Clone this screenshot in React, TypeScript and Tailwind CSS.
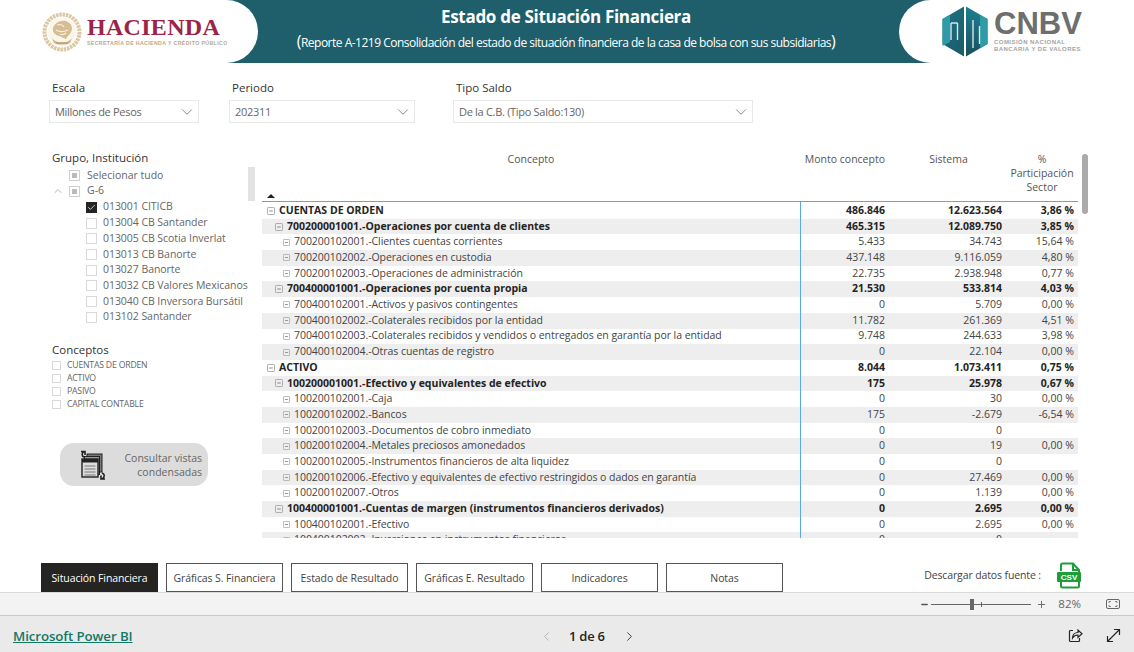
import { ChevronDown, ChevronUp, ChevronLeft, ChevronRight, Check, Minus, Plus } from 'lucide-react';

type Row = { level: 0 | 1 | 2; label: string; monto: string; sistema: string; pct: string };

const rows: Row[] = [
    { level: 0, label: 'CUENTAS DE ORDEN', monto: '486.846', sistema: '12.623.564', pct: '3,86 %' },
    { level: 1, label: '700200001001.-Operaciones por cuenta de clientes', monto: '465.315', sistema: '12.089.750', pct: '3,85 %' },
    { level: 2, label: '700200102001.-Clientes cuentas corrientes', monto: '5.433', sistema: '34.743', pct: '15,64 %' },
    { level: 2, label: '700200102002.-Operaciones en custodia', monto: '437.148', sistema: '9.116.059', pct: '4,80 %' },
    { level: 2, label: '700200102003.-Operaciones de administración', monto: '22.735', sistema: '2.938.948', pct: '0,77 %' },
    { level: 1, label: '700400001001.-Operaciones por cuenta propia', monto: '21.530', sistema: '533.814', pct: '4,03 %' },
    { level: 2, label: '700400102001.-Activos y pasivos contingentes', monto: '0', sistema: '5.709', pct: '0,00 %' },
    { level: 2, label: '700400102002.-Colaterales recibidos por la entidad', monto: '11.782', sistema: '261.369', pct: '4,51 %' },
    { level: 2, label: '700400102003.-Colaterales recibidos y vendidos o entregados en garantía por la entidad', monto: '9.748', sistema: '244.633', pct: '3,98 %' },
    { level: 2, label: '700400102004.-Otras cuentas de registro', monto: '0', sistema: '22.104', pct: '0,00 %' },
    { level: 0, label: 'ACTIVO', monto: '8.044', sistema: '1.073.411', pct: '0,75 %' },
    { level: 1, label: '100200001001.-Efectivo y equivalentes de efectivo', monto: '175', sistema: '25.978', pct: '0,67 %' },
    { level: 2, label: '100200102001.-Caja', monto: '0', sistema: '30', pct: '0,00 %' },
    { level: 2, label: '100200102002.-Bancos', monto: '175', sistema: '-2.679', pct: '-6,54 %' },
    { level: 2, label: '100200102003.-Documentos de cobro inmediato', monto: '0', sistema: '0', pct: '' },
    { level: 2, label: '100200102004.-Metales preciosos amonedados', monto: '0', sistema: '19', pct: '0,00 %' },
    { level: 2, label: '100200102005.-Instrumentos financieros de alta liquidez', monto: '0', sistema: '0', pct: '' },
    { level: 2, label: '100200102006.-Efectivo y equivalentes de efectivo restringidos o dados en garantía', monto: '0', sistema: '27.469', pct: '0,00 %' },
    { level: 2, label: '100200102007.-Otros', monto: '0', sistema: '1.139', pct: '0,00 %' },
    { level: 1, label: '100400001001.-Cuentas de margen (instrumentos financieros derivados)', monto: '0', sistema: '2.695', pct: '0,00 %' },
    { level: 2, label: '100400102001.-Efectivo', monto: '0', sistema: '2.695', pct: '0,00 %' },
    { level: 2, label: '100400102002.-Inversiones en instrumentos financieros', monto: '0', sistema: '0', pct: '' },
];

const institutions = [
    '013001 CITICB',
    '013004 CB Santander',
    '013005 CB Scotia Inverlat',
    '013013 CB Banorte',
    '013027 Banorte',
    '013032 CB Valores Mexicanos',
    '013040 CB Inversora Bursátil',
    '013102 Santander',
];

const tabs = ['Situación Financiera', 'Gráficas S. Financiera', 'Estado de Resultado', 'Gráficas E. Resultado', 'Indicadores', 'Notas'];

function Dropdown({ label, value, width, gap }: { label: string; value: string; width: string; gap: string }) {
    return (
        <div className={`${width} ${gap} shrink-0`}>
            <div className="pl-[3px] text-[11.500px] leading-[16px] text-[#333]">{label}</div>
            <div className="mt-[4px] flex h-[23px] items-center justify-between border border-[#e8e8e8] pl-[5px] pr-[2px] pt-[2px] text-[11px] tracking-[-0.3px] text-[#666]">
                <span>{value}</span>
                <ChevronDown size={18} strokeWidth={0.9} className="-mt-[2px] text-[#555]" />
            </div>
        </div>
    );
}

function SealLogo() {
    return (
        <svg width="40" height="40" viewBox="0 0 40 40">
            <circle cx="20" cy="20" r="17.500" fill="none" stroke="#dcc7a3" strokeWidth="4" strokeDasharray="2.500 0.800" />
            <circle cx="20" cy="20" r="14.500" fill="#fbf6ec" />
            <path d="M11 16c2-6 10-9 15-6 4 2 5 7 3 10-1 3-4 4-5 7-3-1-4-2-7-3-4-1-7-4-6-8z" fill="#d6bd93" />
            <path d="M15 13c3-1 6 0 7 2M14 18c3 2 8 2 12 0M18 22c2 1 4 1 6-1" stroke="#f7efe0" strokeWidth="1.200" fill="none" />
            <path d="M10 26c4 6 16 6 20 0l-2 5c-4 2-12 2-16 0z" fill="#cfb487" />
            <path d="M14 31h12" stroke="#bfa273" strokeWidth="1.500" />
        </svg>
    );
}

function CnbvMark() {
    return (
        <svg width="46" height="51" viewBox="0 0 46 51">
            <defs>
                <linearGradient id="hexa" x1="0" y1="0" x2="0" y2="1">
                    <stop offset="0" stopColor="#1c7f92" />
                    <stop offset="1" stopColor="#19505f" />
                </linearGradient>
                <linearGradient id="hexb" x1="0" y1="0" x2="0.600" y2="1">
                    <stop offset="0" stopColor="#1b7486" />
                    <stop offset="1" stopColor="#1c5d6c" />
                </linearGradient>
            </defs>
            <path d="M22 0.500 0.500 13v25L22 50.500z" fill="url(#hexb)" />
            <path d="M24 0.500 45.500 13v25L24 50.500z" fill="url(#hexa)" />
            <path d="M0.500 13 8 9v27l-7.500 4z" fill="#2f9aa8" />
            <path d="M38 9l7.500 4v25L38 42z" fill="#2f9aa8" />
            <path d="M9 17v17M15.500 17v17M15.500 17h-6.500" stroke="#d5e8ea" strokeWidth="1.400" fill="none" />
            <path d="M31 14v28M37.500 20v18" stroke="#d5e8ea" strokeWidth="1.400" fill="none" />
        </svg>
    );
}

function ExpandBox({ size }: { size: number }) {
    return (
        <svg width={size} height={size} viewBox="0 0 9 9" className="shrink-0">
            <rect x="0.500" y="0.500" width="8" height="8" rx="1" fill="none" stroke="#a0a0a0" />
            <path d="M2.500 4.500h4" stroke="#808080" />
        </svg>
    );
}

function ViewsIcon() {
    return (
        <svg width="30" height="32" viewBox="0 0 30 32" fill="none">
            <path d="M6 8C3.500 7 3.500 4 6 2.500M3 2.500h4v3.500" stroke="#222" strokeWidth="1.600" />
            <rect x="9" y="5" width="15" height="18" fill="#777" stroke="#222" />
            <rect x="6.500" y="7.500" width="15" height="18" fill="#999" stroke="#222" />
            <rect x="4" y="10" width="16" height="18" fill="#ddd" stroke="#222" strokeWidth="1.400" />
            <rect x="4" y="10" width="16" height="3.500" fill="#222" />
            <path d="M6.500 17h11M6.500 20h11M6.500 23h11M6.500 26h11" stroke="#777" />
            <path d="M24 24c3 1 3 4 0 6M27 30h-4v-3.500" stroke="#222" strokeWidth="1.600" />
        </svg>
    );
}

function CsvIcon() {
    return (
        <svg width="26" height="27" viewBox="0 0 26 27" fill="none">
            <path d="M5 9V3a1.500 1.500 0 0 1 1.500-1.500H17L23 8v16a1.500 1.500 0 0 1-1.500 1.500h-15A1.500 1.500 0 0 1 5 24v-4" stroke="#1f9d3a" strokeWidth="2" />
            <path d="M17 2v6h6" stroke="#1f9d3a" strokeWidth="2" />
            <rect x="1" y="10" width="24" height="10" rx="1" fill="#1f9d3a" />
            <text x="13" y="18.200" textAnchor="middle" fontSize="8" fontWeight="700" fill="#fff" fontFamily="'Liberation Sans', sans-serif">CSV</text>
        </svg>
    );
}

function ShareIcon() {
    return (
        <svg width="15" height="15" viewBox="0 0 15 15" fill="none" stroke="#252423" strokeWidth="1.200">
            <path d="M5 2.500H2.500a1 1 0 0 0-1 1v9a1 1 0 0 0 1 1h8a1 1 0 0 0 1-1V10" />
            <path d="M4.500 10c0-3.500 2.500-5.500 5.500-5.500V2l4 3.700-4 3.700V7c-2.500 0-4.200.8-5.500 3z" />
        </svg>
    );
}

function ExpandIcon() {
    return (
        <svg width="15" height="15" viewBox="0 0 15 15" fill="none" stroke="#252423" strokeWidth="1.200">
            <path d="M1.500 13.500l12-12M8 1.500h5.500V7M1.500 8v5.500H7" />
        </svg>
    );
}

function App() {
    return (
        <div className="flex h-screen w-full flex-col overflow-hidden bg-white font-['Open_Sans','Noto_Sans',sans-serif]">
            <header className="flex h-[63px] shrink-0 bg-[#1f5f6b]">
                <div className="flex w-[258px] shrink-0 items-center gap-[5px] rounded-r-[46px] bg-white pl-[42px]">
                    <SealLogo />
                    <div className="-mt-[2px] flex flex-col">
                        <span className="font-['Liberation_Serif',serif] text-[24px] font-bold leading-[26px] tracking-[0.3px] text-[#9d2449]">HACIENDA</span>
                        <span className="whitespace-nowrap font-['Liberation_Sans',sans-serif] text-[5.200px] font-bold leading-[7px] tracking-[0.4px] text-[#b8a88f]">SECRETARÍA DE HACIENDA Y CRÉDITO PÚBLICO</span>
                    </div>
                </div>
                <div className="flex min-w-0 flex-1 flex-col items-center pr-[25px] pt-[5px] text-white">
                    <div className="text-[17px] font-bold leading-[24px] tracking-[-0.3px]">Estado de Situación Financiera</div>
                    <div className="mt-[2px] whitespace-nowrap text-[12px] leading-[20px] tracking-[-0.5px]">
                        <span className="text-[16px]">(</span>Reporte A-1219 Consolidación del estado de situación financiera de la casa de bolsa con sus subsidiarias<span className="text-[16px]">)</span>
                    </div>
                </div>
                <div className="flex w-[235px] shrink-0 items-center gap-[6px] rounded-l-[46px] bg-white pl-[43px]">
                    <CnbvMark />
                    <div className="flex flex-col">
                        <span className="font-['Liberation_Sans',sans-serif] text-[31px] font-bold leading-[28px] text-[#6d6e6e]">CNBV</span>
                        <span className="mt-[1px] whitespace-nowrap font-['Liberation_Sans',sans-serif] text-[6px] font-bold leading-[7px] tracking-[0.45px] text-[#a3a3a3]">COMISIÓN NACIONAL</span>
                        <span className="whitespace-nowrap font-['Liberation_Sans',sans-serif] text-[6px] font-bold leading-[7px] tracking-[0.45px] text-[#a3a3a3]">BANCARIA Y DE VALORES</span>
                    </div>
                </div>
            </header>

            <section className="flex h-[87px] shrink-0 pl-[49px] pt-[17px]">
                <Dropdown label="Escala" value="Millones de Pesos" width="w-[150px]" gap="mr-[30px]" />
                <Dropdown label="Periodo" value="202311" width="w-[186px]" gap="mr-[38px]" />
                <Dropdown label="Tipo Saldo" value="De la C.B. (Tipo Saldo:130)" width="w-[300px]" gap="" />
            </section>

            <main className="flex h-[413px] shrink-0">
                <aside className="relative w-[262px] shrink-0 pl-[52px]">
                    <div className="h-[17px] text-[11.500px] leading-[16px] text-[#333]">Grupo, Institución</div>
                    <div className="relative h-[152px]">
                        <div className="flex h-[16px] items-center pl-[17px] pt-[1px] text-[10.500px] text-[#666]">
                            <span className="mr-[7px] flex size-[11px] items-center justify-center border border-[#d0d0d0]"><span className="size-[5px] bg-[#bbb]" /></span>
                            Selecionar tudo
                        </div>
                        <div className="flex h-[16.500px] items-center text-[10.500px] text-[#666]">
                            <ChevronUp size={12} strokeWidth={1} className="mr-[5px] text-[#666]" />
                            <span className="mr-[7px] flex size-[11px] items-center justify-center border border-[#d0d0d0]"><span className="size-[5px] bg-[#bbb]" /></span>
                            G-6
                        </div>
                        {institutions.map((name, i) => (
                            <div key={name} className="flex h-[15.700px] items-center pl-[34px] text-[10.500px] tracking-[-0.05px] whitespace-nowrap text-[#666]">
                                {i === 0 ? (
                                    <span className="mr-[6px] flex size-[11px] items-center justify-center bg-[#252423]"><Check size={9} strokeWidth={2} className="text-white" /></span>
                                ) : (
                                    <span className="mr-[6px] size-[11px] border border-[#d9d9d9]" />
                                )}
                                {name}
                            </div>
                        ))}
                    </div>
                    <div className="absolute right-[7px] top-[17px] h-[34px] w-[7px] bg-[#e3e3e3]" />

                    <div className="mt-[23px] text-[11.500px] leading-[16px] text-[#333]">Conceptos</div>
                    <div className="mt-[1px]">
                        {['CUENTAS DE ORDEN', 'ACTIVO', 'PASIVO', 'CAPITAL CONTABLE'].map((c) => (
                            <div key={c} className="flex h-[13px] items-center text-[8.700px] tracking-[-0.2px] text-[#666]">
                                <span className="mr-[6px] size-[9px] border border-[#d9d9d9]" />
                                {c}
                            </div>
                        ))}
                    </div>

                    <button className="ml-[8px] mt-[32px] flex h-[43px] w-[148px] items-center justify-between rounded-[14px] bg-[#dcdcdc] pl-[18px] pr-[6px] text-right text-[10.500px] leading-[14px] text-[#666]">
                        <ViewsIcon />
                        <span>Consultar vistas<br />condensadas</span>
                    </button>
                </aside>

                <div className="relative flex min-w-0 flex-1">
                    <div className="w-[816px] shrink-0">
                        <div className="relative flex h-[52px] border-b border-[#5aa9e6] text-[10.500px] leading-[14px] text-[#555]">
                            <div className="flex-1 pr-[4px] pt-[2px] text-center">Concepto</div>
                            <div className="w-[85px] pr-[4px] pt-[2px] text-right whitespace-nowrap">Monto concepto</div>
                            <div className="w-[117px] pl-[2px] pt-[2px] text-center">Sistema</div>
                            <div className="w-[72px] pt-[2px] text-center"><div>%</div><div>Participación</div><div>Sector</div></div>
                            <div className="absolute bottom-[3px] left-[5px] h-0 w-0 border-x-[4px] border-b-[4px] border-x-transparent border-b-[#222]" />
                        </div>
                        <div className="relative h-[336px] overflow-hidden pt-px">
                            <div className="absolute bottom-0 left-[538px] top-0 w-px bg-[#5aa9e6]" />
                            {rows.map((r, i) => (
                                <div key={r.label} className={`flex h-[15.700px] items-center text-[10.500px] ${i % 2 === 1 ? 'bg-[#eeeeee]' : ''} ${r.level < 2 ? 'font-bold text-[#252423]' : 'text-[#444]'}`}>
                                    <div className={`flex min-w-0 w-[538px] shrink-0 items-center gap-[4px] whitespace-nowrap ${r.level === 0 ? 'pl-[5px]' : r.level === 1 ? 'pl-[13px]' : 'pl-[21px]'}`}>
                                        <ExpandBox size={r.level === 2 ? 7 : 8} />
                                        <span className={r.level < 2 ? '' : 'tracking-[-0.05px]'}>{r.label}</span>
                                    </div>
                                    <div className="w-[85px] shrink-0 text-right">{r.monto}</div>
                                    <div className="w-[117px] shrink-0 text-right">{r.sistema}</div>
                                    <div className="w-[72px] shrink-0 text-right">{r.pct}</div>
                                </div>
                            ))}
                        </div>
                    </div>
                    <div className="absolute left-[820px] top-[4px] h-[60px] w-[6px] rounded-full bg-[#ababab]" />
                </div>
            </main>

            <div className="flex h-[29px] shrink-0 items-stretch gap-[8px] pl-[41px]">
                {tabs.map((t, i) => (
                    <div key={t} className={`flex w-[117px] items-center justify-center pt-[2px] text-[10.500px] tracking-[-0.1px] ${i === 0 ? 'bg-[#252423] text-white' : 'border border-[#555] bg-white text-[#444]'}`}>{t}</div>
                ))}
                <div className="ml-auto flex items-center pr-[52px]">
                    <span className="-mt-[4px] mr-[15px] text-[10.500px] tracking-[-0.12px] text-[#444]">Descargar datos fuente :</span>
                    <div className="-mt-[4px]"><CsvIcon /></div>
                </div>
            </div>

            <div className="flex h-[24px] shrink-0 items-center justify-end border-y border-y-[#dadada] border-b-[#c8c8c8] bg-[#f3f3f3] pr-[14px]">
                <Minus size={9} strokeWidth={4} className="mr-[2px] text-[#555]" />
                <div className="relative h-px w-[100px] bg-[#666]">
                    <div className="absolute -top-[5px] left-[39px] h-[11px] w-[4px] bg-[#666]" />
                    <div className="absolute -top-[2px] left-[50px] h-[5px] w-px bg-[#666]" />
                </div>
                <Plus size={11} strokeWidth={2} className="ml-[5px] text-[#666]" />
                <span className="ml-[11px] text-[11.500px] text-[#666]">82%</span>
                <svg width="14" height="10" viewBox="0 0 14 10" fill="none" className="ml-[25px]">
                    <rect x="0.500" y="0.500" width="13" height="9" rx="1.500" stroke="#666" />
                    <path d="M3 4V2.500h2M11 4V2.500H9M3 6v1.500h2M11 6v1.500H9" stroke="#666" strokeWidth="0.800" />
                </svg>
            </div>

            <footer className="flex flex-1 items-center bg-[#eaeaea] pl-[13px] pr-[13px] pt-[5px]">
                <a href="#" className="w-[526px] text-[13.300px] font-semibold tracking-[-0.1px] text-[#117865] underline">Microsoft Power BI</a>
                <ChevronLeft size={15} strokeWidth={1.500} className="text-[#b0b0b0]" />
                <span className="ml-[15px] mr-[17px] text-[13px] font-semibold tracking-[-0.25px] text-[#252423]">1 de 6</span>
                <ChevronRight size={15} strokeWidth={1.500} className="text-[#333]" />
                <div className="ml-auto flex items-center gap-[23px] pb-[3px]">
                    <ShareIcon />
                    <ExpandIcon />
                </div>
            </footer>
        </div>
    );
}

export default App;
